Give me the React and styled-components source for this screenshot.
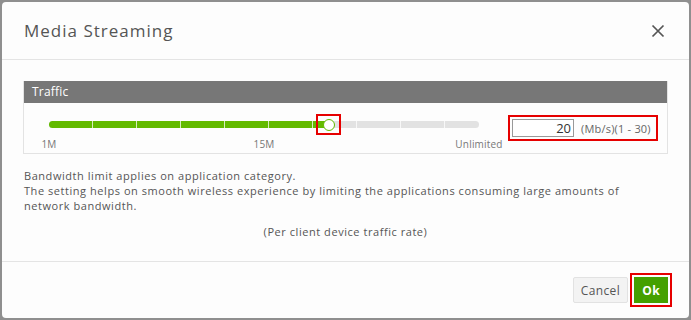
import styled, { createGlobalStyle } from 'styled-components'

const GlobalStyle = createGlobalStyle`
    body {
        margin: 0;
        background-color: #8f8f8f;
        font-family: "Open Sans", "Liberation Sans", sans-serif;
        letter-spacing: 0.2px;
    }
`

const Backdrop = styled.div`
    width: 691px;
    height: 320px;
    padding: 2px;
    box-sizing: border-box;
`

const Modal = styled.div`
    height: 100%;
    background-color: #fdfdfd;
    border-radius: 4px;
    display: flex;
    flex-direction: column;
`

const Header = styled.div`
    height: 57px;
    padding: 0 24px 0 22px;
    display: flex;
    align-items: center;
    justify-content: space-between;
    border-bottom: 1px solid #e4e4e4;
`

const Title = styled.div`
    font-size: 17px;
    color: #555;
    letter-spacing: 1px;
`

const CloseButton = styled.div`
    width: 14px;
    height: 14px;
    display: flex;
`

const Body = styled.div`
    flex: 1;
    padding: 21px 21px 0 21px;
`

const Panel = styled.div`
    border: 1px solid #e3e3e3;
    border-top: none;
`

const PanelHeading = styled.div`
    height: 22px;
    line-height: 22px;
    background-color: #777;
    color: #fff;
    font-size: 12px;
    padding-left: 8px;
`

const PanelContent = styled.div`
    height: 50px;
    padding-left: 25px;
    display: flex;
    align-items: flex-start;
`

const SliderBox = styled.div`
    width: 430px;
    padding-top: 18px;
    margin-right: 29px;
`

const Track = styled.div`
    position: relative;
    height: 7px;
    border-radius: 4px;
    background-color: #e2e2e2;
`

const Fill = styled.div`
    height: 100%;
    border-radius: 4px 0 0 4px;
    background-color: #63ba00;
`

const Ticks = styled.div`
    position: absolute;
    inset: 0;
    background: repeating-linear-gradient(to right, transparent 0 43px, rgba(255, 255, 255, 0.75) 43px 44px);
`

const Thumb = styled.div`
    position: absolute;
    top: 50%;
    width: 10px;
    height: 10px;
    margin: -6px 0 0 -6px;
    border: 1.5px solid #63ba00;
    border-radius: 50%;
    background-color: #fff;
`

const Highlight = styled.div`
    position: absolute;
    left: -8px;
    top: -6px;
    width: 21px;
    height: 17px;
    border: 2px solid #e60000;
`

const Scale = styled.div`
    display: flex;
    justify-content: space-between;
    margin-top: 9px;
`

const ScaleLabel = styled.div`
    width: 0;
    display: flex;
    justify-content: center;
    white-space: nowrap;
    font-size: 10px;
    color: #777;
`

const RateBox = styled.div`
    margin-top: 12px;
    border: 2px solid #e60000;
    padding: 2px 5px 2px 2px;
    display: flex;
    align-items: center;
    gap: 7px;
`

const RateInput = styled.input`
    width: 62px;
    height: 18px;
    box-sizing: border-box;
    border: 1px solid #999;
    padding: 0 2px;
    text-align: right;
    font-family: "Open Sans", "Liberation Sans", sans-serif;
    font-size: 13px;
    color: #333;
    background: #fff;
    outline: none;
`

const RateUnit = styled.span`
    font-size: 11px;
    color: #666;
`

const Description = styled.div`
    margin: 14px 0 0 1px;
    padding-right: 20px;
    font-size: 11px;
    line-height: 15px;
    letter-spacing: 0.55px;
    color: #555;
`

const Note = styled.div`
    margin-top: 11px;
    text-align: center;
    font-size: 11px;
    letter-spacing: 0.55px;
    color: #555;
`

const Footer = styled.div`
    height: 56px;
    padding-right: 21px;
    border-top: 1px solid #e4e4e4;
    display: flex;
    align-items: center;
    justify-content: flex-end;
    gap: 6px;
`

const Button = styled.button`
    height: 26px;
    padding: 0 7px;
    border-radius: ${p => p.primary ? 0 : 2}px;
    font-family: "Open Sans", "Liberation Sans", sans-serif;
    font-size: 12px;
    letter-spacing: 0.4px;
    border: 1px solid ${p => p.primary ? '#45a000' : '#e2e2e2'};
    background-color: ${p => p.primary ? '#45a000' : '#f3f3f3'};
    color: ${p => p.primary ? '#fff' : '#555'};
    font-weight: ${p => p.primary ? 700 : 400};
    outline: ${p => p.primary ? '2px solid #e60000' : 'none'};
    outline-offset: 2px;
`

function App() {
    const value = 20
    const position = ((value - 1) / 29) * 99.4

    return (
        <Backdrop>
            <GlobalStyle/>
            <Modal>
                <Header>
                    <Title>Media Streaming</Title>
                    <CloseButton>
                        <svg width="14" height="14" viewBox="0 0 14 14">
                            <path d="M1.5 1.5 L12.5 12.5 M12.5 1.5 L1.5 12.5" stroke="#555" strokeWidth="1.7" fill="none"/>
                        </svg>
                    </CloseButton>
                </Header>
                <Body>
                    <Panel>
                        <PanelHeading>Traffic</PanelHeading>
                        <PanelContent>
                            <SliderBox>
                                <Track>
                                    <Fill style={{width: position + '%'}}/>
                                    <Ticks/>
                                    <Thumb style={{left: position + '%'}}>
                                        <Highlight/>
                                    </Thumb>
                                </Track>
                                <Scale>
                                    <ScaleLabel>1M</ScaleLabel>
                                    <ScaleLabel>15M</ScaleLabel>
                                    <ScaleLabel>Unlimited</ScaleLabel>
                                </Scale>
                            </SliderBox>
                            <RateBox>
                                <RateInput defaultValue={value}/>
                                <RateUnit>(Mb/s)(1 - 30)</RateUnit>
                            </RateBox>
                        </PanelContent>
                    </Panel>
                    <Description>
                        Bandwidth limit applies on application category.<br/>
                        The setting helps on smooth wireless experience by limiting the applications consuming large amounts of network bandwidth.
                    </Description>
                    <Note>(Per client device traffic rate)</Note>
                </Body>
                <Footer>
                    <Button>Cancel</Button>
                    <Button primary>Ok</Button>
                </Footer>
            </Modal>
        </Backdrop>
    )
}

export default App
